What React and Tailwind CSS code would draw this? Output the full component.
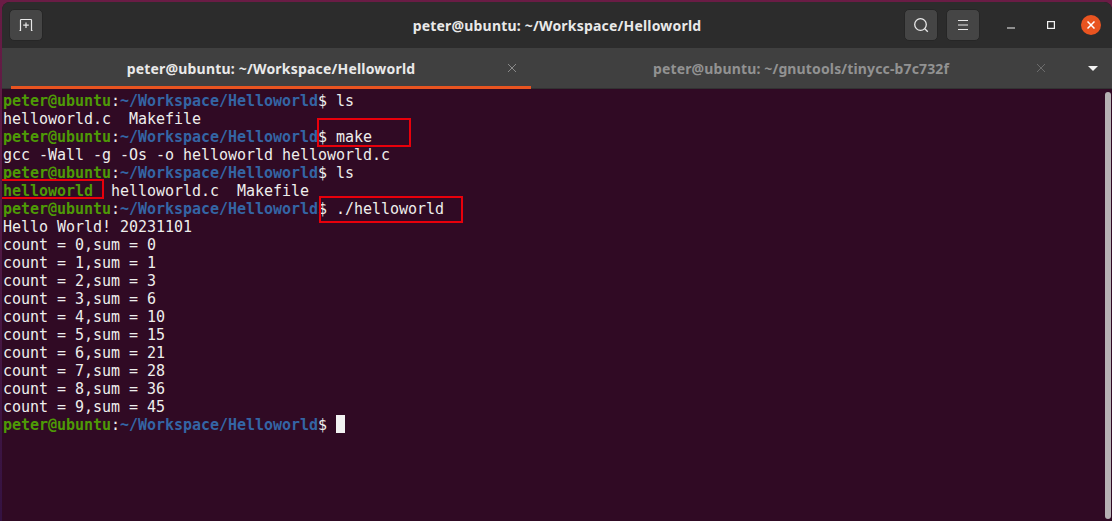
const G = ({ children }) => <span className="font-bold text-[#4e9a06]">{children}</span>;
const B = ({ children }) => <span className="font-bold text-[#3465a4]">{children}</span>;

const Prompt = ({ cmd }) => (
  <div className="h-[18px]">
    <G>peter@ubuntu</G>:<B>~/Workspace/Helloworld</B>${cmd}
  </div>
);
const Line = ({ children }) => <div className="h-[18px]">{children}</div>;

const counts = [
  [0, 0], [1, 1], [2, 3], [3, 6], [4, 10], [5, 15], [6, 21], [7, 28], [8, 36], [9, 45],
];

const HeaderButton = ({ children }) => (
  <div className="w-[34px] h-[32px] rounded-[5px] bg-[#454545] border border-[#262626] flex items-center justify-center">
    {children}
  </div>
);

const RedBox = ({ className }) => (
  <div className={"absolute border-2 border-[#e8000b] " + className} />
);

const CloseX = ({ className, stroke }) => (
  <svg className={className} width="10" height="10" viewBox="0 0 10 10" fill="none" stroke={stroke} strokeWidth="1">
    <path d="M1 1l8 8M9 1l-8 8" />
  </svg>
);

export default function App() {
  return (
    <div
      className="w-[1112px] h-[521px] overflow-hidden bg-linear-to-b from-[#6a1c45] to-[#341242] pl-[2px] pt-[2px]"
      style={{ fontFamily: '"Noto Sans", sans-serif' }}
    >
      <div className="w-[1110px] h-[519px] rounded-t-[8px] overflow-hidden flex flex-col bg-[#300a24]">
        <header className="relative h-[46px] shrink-0 bg-[#2c2c2c] flex items-center pl-[7px] pr-[11px]">
          <HeaderButton>
            <svg width="16" height="16" viewBox="0 0 16 16" fill="none" stroke="#e8e8e8" strokeWidth="1.2">
              <path d="M1.5 13.5h1V3.2q0-.7.7-.7h9.6q.7 0 .7.7v10.3h1M8 5.5v5.5M5.2 8.2h5.6" />
            </svg>
          </HeaderButton>
          <div className="absolute inset-0 flex items-center justify-center pointer-events-none">
            <span className="text-[14px] font-bold tracking-[0.014em] text-[#e9e9e9]">peter@ubuntu: ~/Workspace/Helloworld</span>
          </div>
          <div className="ml-auto flex items-center">
            <div className="flex gap-[8px] mr-[27px]">
              <HeaderButton>
                <svg width="16" height="16" viewBox="0 0 16 16" fill="none" stroke="#e8e8e8" strokeWidth="1.3">
                  <circle cx="7.5" cy="7.5" r="5.8" />
                  <path d="M11.8 11.8l3 3" />
                </svg>
              </HeaderButton>
              <HeaderButton>
                <svg width="12" height="12" viewBox="0 0 12 12" fill="none" stroke="#e8e8e8" strokeWidth="1.2">
                  <path d="M1 1.5h10M1 6h10M1 10.5h10" />
                </svg>
              </HeaderButton>
            </div>
            <svg className="mr-[32px]" width="8" height="8" viewBox="0 0 8 8" fill="none" stroke="#f2f2f2" strokeWidth="1.2">
              <path d="M0 7h8" />
            </svg>
            <svg className="mr-[26px]" width="8" height="8" viewBox="0 0 8 8" fill="none" stroke="#f2f2f2" strokeWidth="1.2">
              <rect x=".6" y=".6" width="6.8" height="6.8" />
            </svg>
            <div className="w-[20px] h-[20px] rounded-full bg-[#e95420] flex items-center justify-center">
              <svg width="8" height="8" viewBox="0 0 8 8" fill="none" stroke="#ffffff" strokeWidth="1.5">
                <path d="M.5.5l7 7M7.5.5l-7 7" />
              </svg>
            </div>
          </div>
        </header>

        <nav className="relative h-[41px] shrink-0 flex bg-[#404040] border-b border-[#323232] pl-[9px]">
          <div className="relative w-[520px] h-[40px] flex items-center justify-center">
            <span className="text-[14px] font-bold tracking-[0.014em] text-[#e9e9e9]">peter@ubuntu: ~/Workspace/Helloworld</span>
            <CloseX className="absolute top-[15px] right-[14px]" stroke="#8a8a8a" />
            <div className="absolute left-0 right-0 top-[38px] h-[3px] bg-[#e95420]" />
          </div>
          <div className="relative w-[540px] h-[40px] flex items-center justify-center">
            <span className="text-[14px] font-bold tracking-[0.01em] text-[#929292]">peter@ubuntu: ~/gnutools/tinycc-b7c732f</span>
            <CloseX className="absolute top-[15px] right-[25px]" stroke="#6c6c6c" />
          </div>
          <svg className="absolute right-[14px] top-[18px]" width="10" height="5" viewBox="0 0 10 5" fill="#f2f2f2">
            <path d="M0 0h10L5 5z" />
          </svg>
        </nav>

        <main
          className="relative flex-1 pt-[3px] pl-px text-[15px] leading-[18px] tracking-[-0.03px] whitespace-pre text-[#eeeeec]"
          style={{ fontFamily: '"DejaVu Sans Mono", monospace' }}
        >
          <Prompt cmd=" ls" />
          <Line>helloworld.c  Makefile</Line>
          <Prompt cmd=" make" />
          <Line>gcc -Wall -g -Os -o helloworld helloworld.c</Line>
          <Prompt cmd=" ls" />
          <Line><G>helloworld</G>  helloworld.c  Makefile</Line>
          <Prompt cmd=" ./helloworld" />
          <Line>Hello World! 20231101</Line>
          {counts.map(([c, s]) => (
            <Line key={c}>{`count = ${c},sum = ${s}`}</Line>
          ))}
          <div className="h-[18px] flex">
            <span><G>peter@ubuntu</G>:<B>~/Workspace/Helloworld</B>$ </span>
            <span className="w-[9px] h-[18px] -mt-px bg-[#f2f2f2]" />
          </div>
          <RedBox className="left-[315px] top-[29px] w-[94px] h-[29px]" />
          <RedBox className="left-[-2px] top-[90px] w-[104px] h-[20px]" />
          <RedBox className="left-[317px] top-[107px] w-[144px] h-[27px]" />
          <div className="absolute right-[1px] top-[3px] w-[6px] h-[427px] rounded-full bg-[#b5b1b3]" />
        </main>
      </div>
    </div>
  );
}
